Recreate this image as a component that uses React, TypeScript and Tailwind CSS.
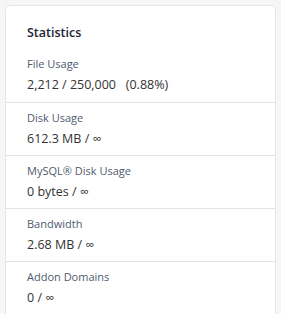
import React from "react";

const rows = [
  { label: "File Usage", value: "2,212 / 250,000\u00a0\u00a0 (0.88%)" },
  { label: "Disk Usage", value: "612.3 MB / \u221e" },
  { label: "MySQL\u00ae Disk Usage", value: "0 bytes / \u221e" },
  { label: "Bandwidth", value: "2.68 MB / \u221e" },
  { label: "Addon Domains", value: "0 / \u221e" },
];

export default function App() {
  return (
    <div className="min-h-[314px] w-[281px] bg-[#f6f6f6] px-[5px] pt-[5px]" style={{ fontFamily: '"Open Sans", sans-serif' }}>
      <div className="h-[320px] rounded-[4px] border border-[#e6e6e6] bg-white">
        <div className="px-[21px] pt-[17px] pb-[7px] text-[12.5px] leading-[19px] font-semibold text-[#1c2436]">Statistics</div>
        {rows.map((r, i) => (
          <div key={r.label} className={(i > 0 ? "border-t border-[#e3e3e3] " : "") + "h-[53px] px-[21px] pt-[7px]"}>
            <div className="text-[11px] leading-[16px] text-[#4f5a70]">{r.label}</div>
            <div className="mt-[4px] text-[12.5px] leading-[18px] text-[#333]">{r.value}</div>
          </div>
        ))}
      </div>
    </div>
  );
}
